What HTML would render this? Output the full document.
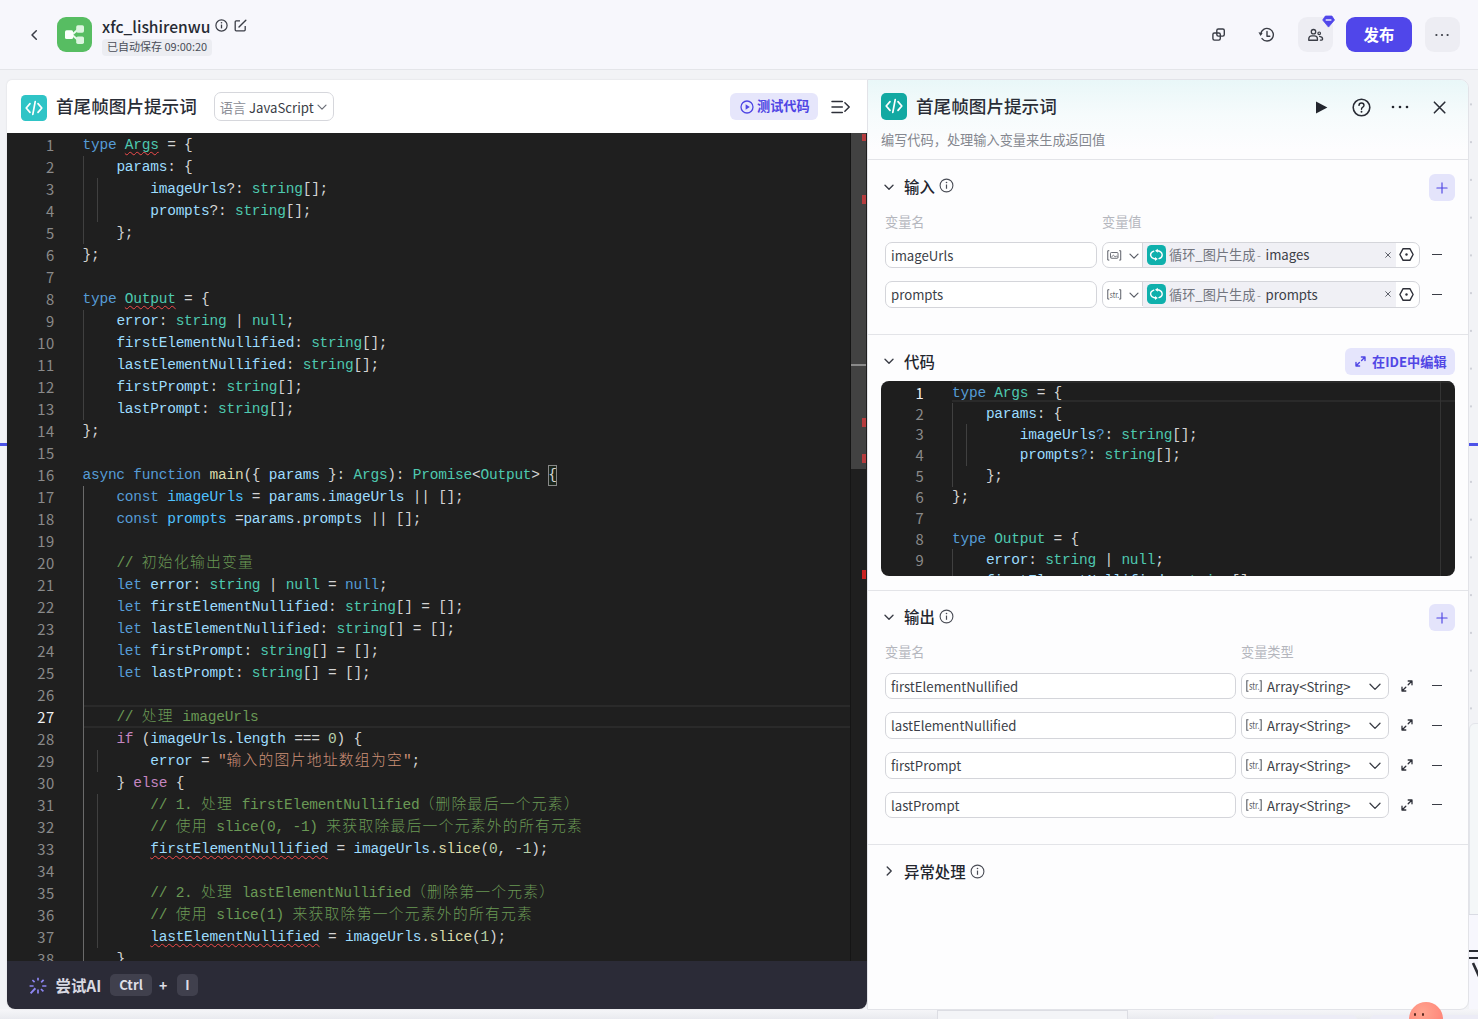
<!DOCTYPE html>
<html lang="zh-CN">
<head>
<meta charset="utf-8">
<title>xfc_lishirenwu</title>
<style>
*{box-sizing:border-box;margin:0;padding:0}
html,body{width:1478px;height:1019px;overflow:hidden}
body{position:relative;background:#f1f2f5;font-family:"Noto Sans CJK SC","Liberation Sans",sans-serif;color:#20232b;-webkit-font-smoothing:antialiased}
.abs{position:absolute}
svg{display:block;position:absolute;overflow:visible}
/* header */
#hdr{position:absolute;left:0;top:0;width:1478px;height:70px;background:#f7f7fc;border-bottom:1px solid #e4e5e9}
#title{position:absolute;left:102px;top:14px;font-size:15.6px;font-weight:500;line-height:24px;color:#262a33;white-space:nowrap}
#saved{position:absolute;left:102px;top:39px;height:17px;padding:0 5px;border-radius:4px;background:#ecedf2;font-size:11px;line-height:15.6px;color:#4a4e58;white-space:nowrap}
#logo{position:absolute;left:57px;top:17px;width:35px;height:35px;border-radius:9px;background:#57bd62}
.hbtn{position:absolute;top:17px;height:35px;border-radius:9px;background:#ededf3}
#pub{position:absolute;left:1346px;top:17px;width:66px;height:35px;border-radius:9px;background:#5046ea;color:#fff;font-size:15.4px;font-weight:700;line-height:35px;text-align:center}
/* left panel */
#lp{position:absolute;left:7px;top:80px;width:860px;height:929px;border-radius:5px 0 8px 8px;background:#fff;overflow:hidden;box-shadow:0 0 2px rgba(0,0,0,.12)}
#lptitle{position:absolute;left:49px;top:11.5px;font-size:17.6px;font-weight:500;line-height:28px;color:#2a2d36;white-space:nowrap}
.cicon{position:absolute;width:26px;height:26px;border-radius:5px}
#lang{position:absolute;left:207px;top:12px;width:120px;height:29px;border:1px solid #d6d7dc;border-radius:7px;font-size:13.2px;line-height:27px;color:#3a3d46;white-space:nowrap;padding-left:4.7px;padding-top:0.6px}
#lang b{font-weight:400;color:#8b8e96}
#test{position:absolute;left:723px;top:13px;width:88px;height:27px;border-radius:6px;background:#e6e6fb;color:#4e45e4;font-size:13.2px;font-weight:700;line-height:25.4px;padding-left:27px;white-space:nowrap}
#ed{position:absolute;left:0;top:53px;width:860px;height:829px;background:#1f1f1f;overflow:hidden}
#ai{position:absolute;left:0;top:881.4px;width:860px;height:48px;background:#2b2b37}
.code{font-family:"Liberation Mono","Noto Sans CJK SC",monospace;font-size:14.5px;letter-spacing:-0.2345px;color:#d4d4d4}
.code .row{position:relative;display:block}
.code .ln{position:absolute;left:0;top:-0.1px;text-align:right;color:#8a8a8a;font-family:"Noto Sans CJK SC","Liberation Sans",sans-serif;font-size:14.8px;letter-spacing:0.4px}
.code .ln.act{color:#f0f0f0}
.code .cd{position:absolute;top:0;white-space:pre}
#ed .row{height:22px;line-height:22px}
#ed .ln{width:47.5px}
#ed .cd{left:75.5px}
.cj{font-family:"Noto Sans CJK SC",sans-serif;font-size:14.8px;letter-spacing:1.25px;font-weight:300;position:relative;top:0.1px;line-height:0}
.sq{text-decoration:underline wavy #f14c4c;text-decoration-thickness:1.2px;text-underline-offset:2px;text-decoration-skip-ink:none}
.bm{display:inline-block;width:8.47px;height:21px;line-height:21px;outline:1px solid #888;outline-offset:-1px;background:rgba(0,100,0,.1);color:#d4d4d4;vertical-align:top;margin-top:0.5px}
.guide{position:absolute;width:1px;background:#404040}
/* right panel */
#rp{position:absolute;left:867px;top:79px;width:602px;height:931px;border-radius:0 9px 9px 0;background:#fdfdfe;border:1px solid #e2e3e8;overflow:hidden}
#rpgrad{position:absolute;left:0;top:0;width:600px;height:70px;background:linear-gradient(180deg,#e9f7f8 0%,#f6fbfc 50%,#fdfdfe 100%)}
#rptitle{position:absolute;left:48px;top:11.8px;font-size:17.6px;font-weight:500;line-height:28px;color:#2a2d36;white-space:nowrap}
#rpsub{position:absolute;left:13px;top:50px;font-size:13.2px;line-height:20px;color:#84878f;white-space:nowrap}
.hr{position:absolute;left:0;width:600px;height:1px;background:#e3e4e8}
.sec{position:absolute;left:36px;margin-top:-1.2px;font-size:15.4px;font-weight:500;line-height:24px;color:#23262e;white-space:nowrap}
.lbl{position:absolute;font-size:13.2px;line-height:20px;color:#b4b6bd;white-space:nowrap}
.plus{position:absolute;left:561px;width:26.4px;height:26.8px;border-radius:6px;background:#e4e4fb}
.inp{position:absolute;height:26.4px;border:1px solid #d4d5da;border-radius:7px;background:#fff;font-size:13.2px;line-height:25.4px;color:#3c3f48;padding-left:5px;white-space:nowrap;overflow:hidden}
.tag{position:absolute;left:40px;top:0;width:253px;height:24.4px;background:#f0f0f5}
.tag span{position:absolute;left:26px;top:1.3px;font-size:13.2px;line-height:22px;color:#72757e;white-space:nowrap}
.tag span b{font-weight:400;color:#3c3f48}
.tag span i{font-style:normal;color:#8b8e96;display:inline-block;width:10px;text-align:center;font-size:11px;position:relative;left:-1.5px}
.loop{position:absolute;left:3.5px;top:2px;width:19px;height:19.7px;border-radius:4.5px;background:#0fb0ac}
#ide{position:absolute;left:477px;top:268.4px;width:110px;height:26.6px;border-radius:6px;background:#e5e5fc;color:#5147e5;font-size:13.2px;font-weight:700;line-height:27px;padding-left:27px;white-space:nowrap}
#rc{position:absolute;left:13px;top:301px;width:574px;height:195px;border-radius:8px;background:#1e1e1e;overflow:hidden}
#rc .row{height:20.9px;line-height:20.9px}
#rc .ln{width:43px}
#rc .cd{left:71px}
.sel{position:absolute;left:373px;width:148px;height:26.4px;border:1px solid #d4d5da;border-radius:7px;background:#fff;font-size:13.2px;line-height:25.4px;color:#3c3f48;padding-left:25px;white-space:nowrap}
</style>
</head>
<body>
<!-- canvas behind -->
<div id="canvas" style="position:absolute;left:0;top:70px;width:1478px;height:949px;background-color:#f2f3f6;background-image:radial-gradient(circle,#cfd1d8 0.8px,transparent 1.25px);background-size:37.75px 37.75px;background-position:17.6px 15.5px"></div>
<div class="abs" style="left:0;top:442.6px;width:7px;height:3px;background:#4d53e8"></div>
<div class="abs" style="left:1469px;top:442.6px;width:9px;height:3px;background:#4d53e8"></div>
<div class="abs" style="left:1469px;top:723px;width:12px;height:290px;background:#f4f7f8;border:1px solid #e3e5ea;border-radius:6px 0 0 0"></div>
<div class="abs" style="left:1469px;top:914px;width:12px;height:1px;background:#d9dbe3"></div>
<div class="abs" style="left:1469px;top:915px;width:12px;height:95px;background:#f7f7fd"></div>
<div class="abs" style="left:1469px;top:949.5px;width:9px;height:2.4px;background:#2a2c33"></div>
<div class="abs" style="left:1469px;top:957px;width:9px;height:2.4px;background:#2a2c33"></div>
<svg style="left:1472px;top:963px" width="8" height="14" viewBox="0 0 8 14"><path d="M1 0 L6 11 L11 0" fill="none" stroke="#2a2c33" stroke-width="2.6"/></svg>
<div class="abs" style="left:0;top:1009px;width:1478px;height:10px;background:linear-gradient(180deg,#f6f6f9 0,#f1f2f5 40%,#e9eaef 100%)"></div>
<div class="abs" style="left:937px;top:1010px;width:191px;height:12px;background:#f3f4f7;border:1px solid #dcdde3"></div>
<div class="abs" style="left:1213px;top:1015px;width:144px;height:10px;background:#ececf6;border-radius:5px 5px 0 0"></div>
<div class="abs" style="left:1370px;top:1015px;width:120px;height:10px;background:#ececf6;border-radius:5px 0 0 0"></div>

<div id="hdr">
  <svg style="left:29px;top:27.7px" width="10" height="14" viewBox="0 0 10 14"><path d="M7.3 2.7 L3 7 L7.3 11.3" fill="none" stroke="#3a3d46" stroke-width="1.5" stroke-linecap="round" stroke-linejoin="round"/></svg>
  <div id="logo">
    <svg style="left:8px;top:8px" width="20" height="20" viewBox="0 0 20 20"><path d="M7 9.7 L13 4.5 M7 9.7 L13 14.9" stroke="#eafaec" stroke-width="2" fill="none"/><rect x="0" y="5.3" width="8.1" height="8.8" rx="1.6" fill="#fbfffb"/><rect x="11.2" y="0.3" width="7.8" height="7.4" rx="1.7" fill="#dcf5df"/><rect x="11.2" y="11.4" width="7.8" height="7.5" rx="1.7" fill="#dcf5df"/></svg>
  </div>
  <div id="title">xfc_lishirenwu</div>
  <svg style="left:215px;top:19px" width="13" height="13" viewBox="0 0 13 13"><circle cx="6.5" cy="6.5" r="5.6" fill="none" stroke="#3a3d46" stroke-width="1.2"/><path d="M6.5 5.6 V9.4" stroke="#3a3d46" stroke-width="1.3"/><circle cx="6.5" cy="3.8" r="0.8" fill="#3a3d46"/></svg>
  <svg style="left:234px;top:19px" width="13" height="13" viewBox="0 0 13 13"><path d="M6 1.8 H2.2 Q1.2 1.8 1.2 2.8 V10.8 Q1.2 11.8 2.2 11.8 H10.2 Q11.2 11.8 11.2 10.8 V7" fill="none" stroke="#3a3d46" stroke-width="1.3"/><path d="M5 8 L11.8 1.2" stroke="#3a3d46" stroke-width="1.4" stroke-linecap="round"/></svg>
  <div id="saved">已自动保存 09:00:20</div>
  <!-- copy icon -->
  <svg style="left:1211px;top:27px" width="15" height="15" viewBox="0 0 15 15"><rect x="5.8" y="2" width="7.5" height="7.1" rx="1.5" fill="none" stroke="#3a3d46" stroke-width="1.4"/><rect x="1.9" y="6" width="7.4" height="7.1" rx="1.5" fill="none" stroke="#3a3d46" stroke-width="1.4"/></svg>
  <!-- history icon -->
  <svg style="left:1258px;top:27px" width="17" height="16" viewBox="0 0 17 16"><path d="M2.75 7.2 A6.3 6.3 0 1 1 4.04 11.58" fill="none" stroke="#3a3d46" stroke-width="1.4" stroke-linecap="round"/><path d="M0.5 5.2 L4.7 6 L2.5 8.9 Z" fill="#3a3d46"/><path d="M9 4.4 V9.2 H11.8" fill="none" stroke="#3a3d46" stroke-width="1.4" stroke-linecap="round" stroke-linejoin="round"/></svg>
  <div class="hbtn" style="left:1298px;width:34.5px"></div>
  <!-- users icon -->
  <svg style="left:1308px;top:28px" width="17" height="14" viewBox="0 0 17 14"><circle cx="5.5" cy="3.7" r="2.2" fill="none" stroke="#3a3d46" stroke-width="1.3"/><path d="M0.75 12.25 V11 Q0.75 7.95 3.8 7.95 H6.4 Q9.45 7.95 9.45 11 V12.25 Z" fill="none" stroke="#3a3d46" stroke-width="1.3" stroke-linejoin="round"/><circle cx="11.2" cy="5.3" r="1.3" fill="none" stroke="#3a3d46" stroke-width="1.2"/><path d="M11.6 8.4 Q14.6 8.8 14.6 11 Q14.6 12.2 12.4 12.2" fill="none" stroke="#3a3d46" stroke-width="1.3" stroke-linecap="round"/></svg>
  <!-- diamond -->
  <svg style="left:1322px;top:15px" width="13" height="13" viewBox="0 0 13 13"><path d="M3.4 1 H9.9 L12.5 5 L6.5 12.1 L0.7 5 Z" fill="#5046ea" stroke="#5046ea" stroke-width="0.8" stroke-linejoin="round"/><path d="M4.2 5 H8.9" stroke="#e8e6ff" stroke-width="1.4" stroke-linecap="round"/></svg>
  <div id="pub">发布</div>
  <div class="hbtn" style="left:1425px;width:35px"></div>
  <svg style="left:1434px;top:33px" width="16" height="4" viewBox="0 0 16 4"><circle cx="2.4" cy="2" r="1.1" fill="#3a3d46"/><circle cx="8" cy="2" r="1.1" fill="#3a3d46"/><circle cx="13.6" cy="2" r="1.1" fill="#3a3d46"/></svg>
</div>

<!-- LEFT PANEL -->
<div id="lp">
  <div class="cicon" style="left:14px;top:14.5px;border-radius:4.5px;background:#2fc4c6">
    <svg style="left:4px;top:5px" width="18" height="16" viewBox="0 0 18 16"><path d="M5 3.6 L1.2 8 L5 12.4 M13 3.6 L16.8 8 L13 12.4 M10.2 1.6 L7.8 14.4" fill="none" stroke="#fff" stroke-width="1.7" stroke-linecap="round" stroke-linejoin="round"/></svg>
  </div>
  <div id="lptitle">首尾帧图片提示词</div>
  <div id="lang"><b>语言</b> JavaScript
    <svg style="left:101.5px;top:11px" width="10" height="7" viewBox="0 0 10 7"><path d="M1 1.2 L5 5.2 L9 1.2" fill="none" stroke="#6b6e77" stroke-width="1.2" stroke-linecap="round" stroke-linejoin="round"/></svg>
  </div>
  <div id="test">测试代码
    <svg style="left:9.5px;top:6.5px" width="14" height="14" viewBox="0 0 14 14"><circle cx="7" cy="7" r="6" fill="none" stroke="#4e45e4" stroke-width="1.3"/><path d="M5.6 4.2 L9.8 7 L5.6 9.8 Z" fill="#4e45e4"/></svg>
  </div>
  <svg style="left:824px;top:20px" width="20" height="14" viewBox="0 0 20 14"><path d="M1 1.5 H11.3 M1 7 H11.3 M1 12.5 H11.3" stroke="#2e3039" stroke-width="1.5" stroke-linecap="round"/><path d="M13.9 2.8 L18.2 7 L13.9 11.2" fill="none" stroke="#2e3039" stroke-width="1.5" stroke-linecap="round" stroke-linejoin="round"/></svg>
  <div id="ed">
    <div class="abs" style="left:77px;top:572px;width:767px;height:23px;border-top:2px solid #2a2a2a;border-bottom:2px solid #2a2a2a"></div>
    <!-- indent guides -->
    <div class="guide" style="left:76px;top:23px;height:88px"></div>
    <div class="guide" style="left:90px;top:45px;height:44px"></div>
    <div class="guide" style="left:76px;top:177px;height:110px"></div>
    <div class="guide" style="left:76px;top:353px;height:476px;background:#6a6a6a"></div>
    <div class="guide" style="left:90px;top:617px;height:22px"></div>
    <div class="guide" style="left:90px;top:661px;height:154px"></div>
    <div class="code abs" style="left:0;top:1.4px;width:860px">
<div class="row"><span class="ln">1</span><span class="cd"><span style="color:#569cd6">type</span> <span class="sq"><span style="color:#4ec9b0">Args</span></span><span style="color:#d4d4d4"> = {</span></span></div>
<div class="row"><span class="ln">2</span><span class="cd">    <span style="color:#9cdcfe">params</span><span style="color:#d4d4d4">: {</span></span></div>
<div class="row"><span class="ln">3</span><span class="cd">        <span style="color:#9cdcfe">imageUrls</span><span style="color:#d4d4d4">?: </span><span style="color:#4ec9b0">string</span><span style="color:#d4d4d4">[];</span></span></div>
<div class="row"><span class="ln">4</span><span class="cd">        <span style="color:#9cdcfe">prompts</span><span style="color:#d4d4d4">?: </span><span style="color:#4ec9b0">string</span><span style="color:#d4d4d4">[];</span></span></div>
<div class="row"><span class="ln">5</span><span class="cd">    <span style="color:#d4d4d4">};</span></span></div>
<div class="row"><span class="ln">6</span><span class="cd"><span style="color:#d4d4d4">};</span></span></div>
<div class="row"><span class="ln">7</span><span class="cd"></span></div>
<div class="row"><span class="ln">8</span><span class="cd"><span style="color:#569cd6">type</span> <span class="sq"><span style="color:#4ec9b0">Output</span></span><span style="color:#d4d4d4"> = {</span></span></div>
<div class="row"><span class="ln">9</span><span class="cd">    <span style="color:#9cdcfe">error</span><span style="color:#d4d4d4">: </span><span style="color:#4ec9b0">string</span><span style="color:#d4d4d4"> | </span><span style="color:#4ec9b0">null</span><span style="color:#d4d4d4">;</span></span></div>
<div class="row"><span class="ln">10</span><span class="cd">    <span style="color:#9cdcfe">firstElementNullified</span><span style="color:#d4d4d4">: </span><span style="color:#4ec9b0">string</span><span style="color:#d4d4d4">[];</span></span></div>
<div class="row"><span class="ln">11</span><span class="cd">    <span style="color:#9cdcfe">lastElementNullified</span><span style="color:#d4d4d4">: </span><span style="color:#4ec9b0">string</span><span style="color:#d4d4d4">[];</span></span></div>
<div class="row"><span class="ln">12</span><span class="cd">    <span style="color:#9cdcfe">firstPrompt</span><span style="color:#d4d4d4">: </span><span style="color:#4ec9b0">string</span><span style="color:#d4d4d4">[];</span></span></div>
<div class="row"><span class="ln">13</span><span class="cd">    <span style="color:#9cdcfe">lastPrompt</span><span style="color:#d4d4d4">: </span><span style="color:#4ec9b0">string</span><span style="color:#d4d4d4">[];</span></span></div>
<div class="row"><span class="ln">14</span><span class="cd"><span style="color:#d4d4d4">};</span></span></div>
<div class="row"><span class="ln">15</span><span class="cd"></span></div>
<div class="row"><span class="ln">16</span><span class="cd"><span style="color:#569cd6">async function</span> <span style="color:#dcdcaa">main</span><span style="color:#d4d4d4">({ </span><span style="color:#9cdcfe">params</span><span style="color:#d4d4d4"> }: </span><span style="color:#4ec9b0">Args</span><span style="color:#d4d4d4">): </span><span style="color:#4ec9b0">Promise</span><span style="color:#d4d4d4">&lt;</span><span style="color:#4ec9b0">Output</span><span style="color:#d4d4d4">&gt; </span><span class="bm">{</span></span></div>
<div class="row"><span class="ln">17</span><span class="cd">    <span style="color:#569cd6">const</span> <span style="color:#4fc1ff">imageUrls</span><span style="color:#d4d4d4"> = </span><span style="color:#9cdcfe">params</span><span style="color:#d4d4d4">.</span><span style="color:#9cdcfe">imageUrls</span><span style="color:#d4d4d4"> || [];</span></span></div>
<div class="row"><span class="ln">18</span><span class="cd">    <span style="color:#569cd6">const</span> <span style="color:#4fc1ff">prompts</span><span style="color:#d4d4d4"> =</span><span style="color:#9cdcfe">params</span><span style="color:#d4d4d4">.</span><span style="color:#9cdcfe">prompts</span><span style="color:#d4d4d4"> || [];</span></span></div>
<div class="row"><span class="ln">19</span><span class="cd"></span></div>
<div class="row"><span class="ln">20</span><span class="cd">    <span style="color:#6a9955">// <span class="cj">初始化输出变量</span></span></span></div>
<div class="row"><span class="ln">21</span><span class="cd">    <span style="color:#569cd6">let</span> <span style="color:#9cdcfe">error</span><span style="color:#d4d4d4">: </span><span style="color:#4ec9b0">string</span><span style="color:#d4d4d4"> | </span><span style="color:#4ec9b0">null</span><span style="color:#d4d4d4"> = </span><span style="color:#569cd6">null</span><span style="color:#d4d4d4">;</span></span></div>
<div class="row"><span class="ln">22</span><span class="cd">    <span style="color:#569cd6">let</span> <span style="color:#9cdcfe">firstElementNullified</span><span style="color:#d4d4d4">: </span><span style="color:#4ec9b0">string</span><span style="color:#d4d4d4">[] = [];</span></span></div>
<div class="row"><span class="ln">23</span><span class="cd">    <span style="color:#569cd6">let</span> <span style="color:#9cdcfe">lastElementNullified</span><span style="color:#d4d4d4">: </span><span style="color:#4ec9b0">string</span><span style="color:#d4d4d4">[] = [];</span></span></div>
<div class="row"><span class="ln">24</span><span class="cd">    <span style="color:#569cd6">let</span> <span style="color:#9cdcfe">firstPrompt</span><span style="color:#d4d4d4">: </span><span style="color:#4ec9b0">string</span><span style="color:#d4d4d4">[] = [];</span></span></div>
<div class="row"><span class="ln">25</span><span class="cd">    <span style="color:#569cd6">let</span> <span style="color:#9cdcfe">lastPrompt</span><span style="color:#d4d4d4">: </span><span style="color:#4ec9b0">string</span><span style="color:#d4d4d4">[] = [];</span></span></div>
<div class="row"><span class="ln">26</span><span class="cd"></span></div>
<div class="row"><span class="ln act">27</span><span class="cd">    <span style="color:#6a9955">// <span class="cj">处理</span> imageUrls</span></span></div>
<div class="row"><span class="ln">28</span><span class="cd">    <span style="color:#c586c0">if</span><span style="color:#d4d4d4"> (</span><span style="color:#9cdcfe">imageUrls</span><span style="color:#d4d4d4">.</span><span style="color:#9cdcfe">length</span><span style="color:#d4d4d4"> === </span><span style="color:#b5cea8">0</span><span style="color:#d4d4d4">) {</span></span></div>
<div class="row"><span class="ln">29</span><span class="cd">        <span style="color:#9cdcfe">error</span><span style="color:#d4d4d4"> = </span><span style="color:#ce9178">&quot;<span class="cj">输入的图片地址数组为空</span>&quot;</span><span style="color:#d4d4d4">;</span></span></div>
<div class="row"><span class="ln">30</span><span class="cd">    <span style="color:#d4d4d4">} </span><span style="color:#c586c0">else</span><span style="color:#d4d4d4"> {</span></span></div>
<div class="row"><span class="ln">31</span><span class="cd">        <span style="color:#6a9955">// 1. <span class="cj">处理</span> firstElementNullified<span class="cj">（删除最后一个元素）</span></span></span></div>
<div class="row"><span class="ln">32</span><span class="cd">        <span style="color:#6a9955">// <span class="cj">使用</span> slice(0, -1) <span class="cj">来获取除最后一个元素外的所有元素</span></span></span></div>
<div class="row"><span class="ln">33</span><span class="cd">        <span class="sq"><span style="color:#9cdcfe">firstElementNullified</span></span><span style="color:#d4d4d4"> = </span><span style="color:#9cdcfe">imageUrls</span><span style="color:#d4d4d4">.</span><span style="color:#dcdcaa">slice</span><span style="color:#d4d4d4">(</span><span style="color:#b5cea8">0</span><span style="color:#d4d4d4">, -</span><span style="color:#b5cea8">1</span><span style="color:#d4d4d4">);</span></span></div>
<div class="row"><span class="ln">34</span><span class="cd"></span></div>
<div class="row"><span class="ln">35</span><span class="cd">        <span style="color:#6a9955">// 2. <span class="cj">处理</span> lastElementNullified<span class="cj">（删除第一个元素）</span></span></span></div>
<div class="row"><span class="ln">36</span><span class="cd">        <span style="color:#6a9955">// <span class="cj">使用</span> slice(1) <span class="cj">来获取除第一个元素外的所有元素</span></span></span></div>
<div class="row"><span class="ln">37</span><span class="cd">        <span class="sq"><span style="color:#9cdcfe">lastElementNullified</span></span><span style="color:#d4d4d4"> = </span><span style="color:#9cdcfe">imageUrls</span><span style="color:#d4d4d4">.</span><span style="color:#dcdcaa">slice</span><span style="color:#d4d4d4">(</span><span style="color:#b5cea8">1</span><span style="color:#d4d4d4">);</span></span></div>
<div class="row"><span class="ln">38</span><span class="cd">    <span style="color:#d4d4d4">}</span></span></div>
    </div>
    <!-- scrollbar -->
    <div class="abs" style="left:843px;top:0;width:1px;height:829px;background:#151515"></div>
    <div class="abs" style="left:844px;top:0;width:15px;height:336px;background:#424242"></div>
    <div class="abs" style="left:844px;top:231px;width:15px;height:2px;background:#8a8a8a"></div>
    <div class="abs" style="left:855px;top:1px;width:4px;height:7px;background:#b63c3e"></div>
    <div class="abs" style="left:855px;top:62px;width:4px;height:9px;background:#b63c3e"></div>
    <div class="abs" style="left:855px;top:285px;width:4px;height:9px;background:#b63c3e"></div>
    <div class="abs" style="left:855px;top:320.5px;width:4px;height:9px;background:#b63c3e"></div>
    <div class="abs" style="left:855px;top:436.5px;width:4px;height:9.5px;background:#c8221f"></div>
  </div>
  <div id="ai">
    <svg style="left:22px;top:15.6px" width="18" height="18" viewBox="0 0 18 18"><g stroke="#8d86f2" stroke-width="1.7" stroke-linecap="butt"><path d="M9 0.8 V3.6"/><path d="M9 12.6 V16.6"/><path d="M0.6 9 H4.6"/><path d="M13.2 9 H17.4"/><path d="M3.4 3 L5.6 5.2"/><path d="M12 12 L14.4 14.4"/><path d="M1.6 16.4 L6.4 11.2" stroke-width="2"/><path d="M12.2 5.4 L14.6 2.8"/></g></svg>
    <div class="abs" style="left:48.5px;top:13.1px;font-size:15.4px;font-weight:700;line-height:22px;color:#d9d9e2;white-space:nowrap">尝试AI</div>
    <div class="abs" style="left:103px;top:12.2px;width:42px;height:22px;border-radius:5px;background:#40404d;color:#dedee6;font-size:13.2px;font-weight:700;line-height:21px;text-align:center">Ctrl</div>
    <div class="abs" style="left:152px;top:12.4px;font-size:14px;font-weight:700;line-height:22px;color:#dedee6">+</div>
    <div class="abs" style="left:170px;top:12.2px;width:21px;height:22px;border-radius:5px;background:#40404d;color:#dedee6;font-size:13.2px;font-weight:700;line-height:21px;text-align:center">I</div>
  </div>
</div>

<!-- RIGHT PANEL -->
<div id="rp">
  <div id="rpgrad"></div>
  <div class="cicon" style="left:13px;top:13px;height:26.6px;background:#12a9a2">
    <svg style="left:4px;top:5px" width="18" height="16" viewBox="0 0 18 16"><path d="M5 3.6 L1.2 8 L5 12.4 M13 3.6 L16.8 8 L13 12.4 M10.2 1.6 L7.8 14.4" fill="none" stroke="#fff" stroke-width="1.7" stroke-linecap="round" stroke-linejoin="round"/></svg>
  </div>
  <div id="rptitle">首尾帧图片提示词</div>
  <svg style="left:447px;top:21px" width="13" height="13" viewBox="0 0 13 13"><path d="M1 0.6 L12.4 6.5 L1 12.4 Z" fill="#23262e"/></svg>
  <svg style="left:483.6px;top:17.5px" width="19" height="19" viewBox="0 0 19 19"><circle cx="9.5" cy="9.5" r="8.3" fill="none" stroke="#2a2d36" stroke-width="1.6"/><path d="M7 7.4 Q7 5 9.5 5 Q12 5 12 7.2 Q12 8.6 10.6 9.3 Q9.5 9.9 9.5 11.2" fill="none" stroke="#23262e" stroke-width="1.4" stroke-linecap="round"/><circle cx="9.5" cy="13.8" r="0.95" fill="#23262e"/></svg>
  <svg style="left:523px;top:25px" width="18" height="4" viewBox="0 0 18 4"><circle cx="2" cy="2" r="1.3" fill="#23262e"/><circle cx="9" cy="2" r="1.3" fill="#23262e"/><circle cx="16" cy="2" r="1.3" fill="#23262e"/></svg>
  <svg style="left:565px;top:21px" width="13" height="13" viewBox="0 0 13 13"><path d="M1.4 1.2 L11.8 11.8 M11.8 1.2 L1.4 11.8" stroke="#2a2d36" stroke-width="1.6" stroke-linecap="round"/></svg>
  <div id="rpsub">编写代码，处理输入变量来生成返回值</div>
  <div class="hr" style="top:79px"></div>

  <!-- 输入 -->
  <svg style="left:16px;top:104px" width="10" height="7" viewBox="0 0 10 7"><path d="M1 1.2 L5 5.2 L9 1.2" fill="none" stroke="#3a3d46" stroke-width="1.4" stroke-linecap="round" stroke-linejoin="round"/></svg>
  <div class="sec" style="top:95px">输入</div>
  <svg class="info" style="left:71px;top:98px" width="15" height="15" viewBox="0 0 15 15"><circle cx="7.5" cy="7.5" r="6.4" fill="none" stroke="#4a4d56" stroke-width="1.1"/><path d="M7.5 6.6 V10.8" stroke="#4a4d56" stroke-width="1.2"/><circle cx="7.5" cy="4.5" r="0.8" fill="#4a4d56"/></svg>
  <div class="plus" style="top:94px"><svg style="left:6.6px;top:7.7px" width="12" height="12" viewBox="0 0 12 12"><path d="M6 0.9 V11.1 M0.9 6 H11.1" stroke="#4e45e4" stroke-width="1.15" stroke-linecap="round"/></svg></div>
  <div class="lbl" style="left:17px;top:132px">变量名</div>
  <div class="lbl" style="left:234px;top:132px">变量值</div>

  <div class="inp" style="left:17px;top:162px;width:212px">imageUrls</div>
  <div class="inp" style="left:234px;top:162px;width:318px;padding:0">
    <svg style="left:3.5px;top:6.8px" width="14.5" height="10.8" viewBox="0 0 16 12"><path d="M2.5 0.8 H0.8 V11.2 H2.5 M13.5 0.8 H15.2 V11.2 H13.5" fill="none" stroke="#5a5d66" stroke-width="1.1"/><rect x="3.8" y="2.8" width="8.4" height="6.4" rx="1" fill="none" stroke="#5a5d66" stroke-width="1"/><path d="M4.5 8.2 L7 5.8 L9 7.6 L10.4 6.6 L11.8 8" fill="none" stroke="#5a5d66" stroke-width="0.9"/></svg>
    <svg style="left:25.5px;top:9.5px" width="10" height="7" viewBox="0 0 10 7"><path d="M1 1.2 L5 5.2 L9 1.2" fill="none" stroke="#5a5d66" stroke-width="1.2" stroke-linecap="round" stroke-linejoin="round"/></svg>
    <div class="abs" style="left:39px;top:0;width:1px;height:24px;background:#d4d5da"></div>
    <div class="tag"><div class="loop"><svg style="left:0;top:0" width="19" height="20" viewBox="0 0 19 20"><path d="M6.75 6.17 A5.8 4.2 0 0 0 8.2 14 M12.05 13.63 A5.8 4.2 0 0 0 10.6 5.8" fill="none" stroke="#fff" stroke-width="1.4" stroke-linecap="round"/><path d="M10.8 14 L8 12 V16 Z M8 5.8 L10.8 3.8 V7.8 Z" fill="#fff"/></svg></div><span>循环_图片生成<i>-</i><b>images</b></span>
      <svg style="left:241.8px;top:8.6px" width="6" height="6" viewBox="0 0 6 6"><path d="M0.4 0.4 L5.6 5.6 M5.6 0.4 L0.4 5.6" stroke="#5f626b" stroke-width="1" fill="none"/></svg></div>
    <svg style="left:296.2px;top:4.4px" width="15" height="15" viewBox="0 0 15 15"><path d="M0.9 7.5 L4.1 1.7 H10.9 L14.1 7.5 L10.9 13.3 H4.1 Z" fill="none" stroke="#2e3039" stroke-width="1.4" stroke-linejoin="round"/><circle cx="7.5" cy="7.5" r="1.2" fill="#2e3039"/></svg>
  </div>
  <div class="abs" style="left:564px;top:174px;width:10px;height:1.3px;background:#3a3d46"></div>

  <div class="inp" style="left:17px;top:201.4px;width:212px">prompts</div>
  <div class="inp" style="left:234px;top:201.4px;width:318px;padding:0">
    <svg style="left:3.5px;top:6.8px" width="14.5" height="10.8" viewBox="0 0 16 12"><path d="M2.5 0.8 H0.8 V11.2 H2.5 M13.5 0.8 H15.2 V11.2 H13.5" fill="none" stroke="#5a5d66" stroke-width="1.1"/><text x="8.2" y="9.6" font-size="9.4" text-anchor="middle" textLength="10.6" lengthAdjust="spacingAndGlyphs" fill="#5a5d66" font-family="Noto Sans CJK SC, sans-serif">str.</text></svg>
    <svg style="left:25.5px;top:9.5px" width="10" height="7" viewBox="0 0 10 7"><path d="M1 1.2 L5 5.2 L9 1.2" fill="none" stroke="#5a5d66" stroke-width="1.2" stroke-linecap="round" stroke-linejoin="round"/></svg>
    <div class="abs" style="left:39px;top:0;width:1px;height:24px;background:#d4d5da"></div>
    <div class="tag"><div class="loop"><svg style="left:0;top:0" width="19" height="20" viewBox="0 0 19 20"><path d="M6.75 6.17 A5.8 4.2 0 0 0 8.2 14 M12.05 13.63 A5.8 4.2 0 0 0 10.6 5.8" fill="none" stroke="#fff" stroke-width="1.4" stroke-linecap="round"/><path d="M10.8 14 L8 12 V16 Z M8 5.8 L10.8 3.8 V7.8 Z" fill="#fff"/></svg></div><span>循环_图片生成<i>-</i><b>prompts</b></span>
      <svg style="left:241.8px;top:8.6px" width="6" height="6" viewBox="0 0 6 6"><path d="M0.4 0.4 L5.6 5.6 M5.6 0.4 L0.4 5.6" stroke="#5f626b" stroke-width="1" fill="none"/></svg></div>
    <svg style="left:296.2px;top:4.4px" width="15" height="15" viewBox="0 0 15 15"><path d="M0.9 7.5 L4.1 1.7 H10.9 L14.1 7.5 L10.9 13.3 H4.1 Z" fill="none" stroke="#2e3039" stroke-width="1.4" stroke-linejoin="round"/><circle cx="7.5" cy="7.5" r="1.2" fill="#2e3039"/></svg>
  </div>
  <div class="abs" style="left:564px;top:214px;width:10px;height:1.3px;background:#3a3d46"></div>

  <div class="hr" style="top:254px"></div>

  <!-- 代码 -->
  <svg style="left:16px;top:278px" width="10" height="7" viewBox="0 0 10 7"><path d="M1 1.2 L5 5.2 L9 1.2" fill="none" stroke="#3a3d46" stroke-width="1.4" stroke-linecap="round" stroke-linejoin="round"/></svg>
  <div class="sec" style="top:270px">代码</div>
  <div id="ide">在IDE中编辑
    <svg style="left:10px;top:8px" width="11" height="11" viewBox="0 0 11 11"><path d="M6.4 1 H10 V4.6 M10 1 L6.6 4.4 M4.6 10 H1 V6.4 M1 10 L4.4 6.6" fill="none" stroke="#4e45e4" stroke-width="1.4" stroke-linecap="round" stroke-linejoin="round"/></svg>
  </div>
  <div id="rc">
    <div class="abs" style="left:71px;top:-0.5px;width:503px;height:21.5px;border-top:2px solid #2a2a2a;border-bottom:2px solid #2a2a2a"></div>
    <div class="guide" style="left:71px;top:22px;height:84px"></div>
    <div class="guide" style="left:85px;top:43px;height:42px"></div>
    <div class="guide" style="left:71px;top:168px;height:30px"></div>
    <div class="abs" style="left:559px;top:0;width:1px;height:195px;background:#333"></div>
    <div class="code abs" style="left:0;top:1.8px;width:574px">
<div class="row"><span class="ln act">1</span><span class="cd"><span style="color:#569cd6">type</span> <span class="nosq"><span style="color:#4ec9b0">Args</span></span><span style="color:#d4d4d4"> = {</span></span></div>
<div class="row"><span class="ln">2</span><span class="cd">    <span style="color:#9cdcfe">params</span><span style="color:#d4d4d4">: {</span></span></div>
<div class="row"><span class="ln">3</span><span class="cd">        <span style="color:#9cdcfe">imageUrls</span><span style="color:#569cd6">?</span><span style="color:#d4d4d4">: </span><span style="color:#4ec9b0">string</span><span style="color:#d4d4d4">[];</span></span></div>
<div class="row"><span class="ln">4</span><span class="cd">        <span style="color:#9cdcfe">prompts</span><span style="color:#569cd6">?</span><span style="color:#d4d4d4">: </span><span style="color:#4ec9b0">string</span><span style="color:#d4d4d4">[];</span></span></div>
<div class="row"><span class="ln">5</span><span class="cd">    <span style="color:#d4d4d4">};</span></span></div>
<div class="row"><span class="ln">6</span><span class="cd"><span style="color:#d4d4d4">};</span></span></div>
<div class="row"><span class="ln">7</span><span class="cd"></span></div>
<div class="row"><span class="ln">8</span><span class="cd"><span style="color:#569cd6">type</span> <span class="nosq"><span style="color:#4ec9b0">Output</span></span><span style="color:#d4d4d4"> = {</span></span></div>
<div class="row"><span class="ln">9</span><span class="cd">    <span style="color:#9cdcfe">error</span><span style="color:#d4d4d4">: </span><span style="color:#4ec9b0">string</span><span style="color:#d4d4d4"> | </span><span style="color:#4ec9b0">null</span><span style="color:#d4d4d4">;</span></span></div>
<div class="row"><span class="ln">10</span><span class="cd">    <span style="color:#9cdcfe">firstElementNullified</span><span style="color:#d4d4d4">: </span><span style="color:#4ec9b0">string</span><span style="color:#d4d4d4">[];</span></span></div>
    </div>
  </div>
  <div class="hr" style="top:510px"></div>

  <!-- 输出 -->
  <svg style="left:16px;top:534px" width="10" height="7" viewBox="0 0 10 7"><path d="M1 1.2 L5 5.2 L9 1.2" fill="none" stroke="#3a3d46" stroke-width="1.4" stroke-linecap="round" stroke-linejoin="round"/></svg>
  <div class="sec" style="top:525px">输出</div>
  <svg class="info" style="left:71px;top:529px" width="15" height="15" viewBox="0 0 15 15"><circle cx="7.5" cy="7.5" r="6.4" fill="none" stroke="#4a4d56" stroke-width="1.1"/><path d="M7.5 6.6 V10.8" stroke="#4a4d56" stroke-width="1.2"/><circle cx="7.5" cy="4.5" r="0.8" fill="#4a4d56"/></svg>
  <div class="plus" style="top:524.3px"><svg style="left:6.6px;top:7.7px" width="12" height="12" viewBox="0 0 12 12"><path d="M6 0.9 V11.1 M0.9 6 H11.1" stroke="#4e45e4" stroke-width="1.15" stroke-linecap="round"/></svg></div>
  <div class="lbl" style="left:17px;top:562px">变量名</div>
  <div class="lbl" style="left:373px;top:562px">变量类型</div>
<div class="inp" style="left:17px;top:593.0px;width:351px">firstElementNullified</div>
<div class="sel" style="top:593.0px"><svg style="left:4px;top:6px" width="16" height="12" viewBox="0 0 16 12"><path d="M2.5 0.8 H0.8 V11.2 H2.5 M13.5 0.8 H15.2 V11.2 H13.5" fill="none" stroke="#5a5d66" stroke-width="1.1"/><text x="8.2" y="9.6" font-size="9.4" text-anchor="middle" textLength="10.6" lengthAdjust="spacingAndGlyphs" fill="#5a5d66" font-family="Noto Sans CJK SC, sans-serif">str.</text></svg>Array&lt;String&gt;<svg style="left:127px;top:9px" width="12" height="8" viewBox="0 0 12 8"><path d="M1 1.2 L6 6.4 L11 1.2" fill="none" stroke="#3a3d46" stroke-width="1.3" stroke-linecap="round" stroke-linejoin="round"/></svg></div>
<svg style="left:533px;top:600.0px" width="12" height="12" viewBox="0 0 12 12"><path d="M7.2 1 H11 V4.8 M11 1 L7.2 4.8 M4.8 11 H1 V7.2 M1 11 L4.8 7.2" fill="none" stroke="#2e3039" stroke-width="1.3" stroke-linecap="round" stroke-linejoin="round"/></svg>
<div class="abs" style="left:564px;top:605px;width:10px;height:1.3px;background:#3a3d46"></div>
<div class="inp" style="left:17px;top:632.3px;width:351px">lastElementNullified</div>
<div class="sel" style="top:632.3px"><svg style="left:4px;top:6px" width="16" height="12" viewBox="0 0 16 12"><path d="M2.5 0.8 H0.8 V11.2 H2.5 M13.5 0.8 H15.2 V11.2 H13.5" fill="none" stroke="#5a5d66" stroke-width="1.1"/><text x="8.2" y="9.6" font-size="9.4" text-anchor="middle" textLength="10.6" lengthAdjust="spacingAndGlyphs" fill="#5a5d66" font-family="Noto Sans CJK SC, sans-serif">str.</text></svg>Array&lt;String&gt;<svg style="left:127px;top:9px" width="12" height="8" viewBox="0 0 12 8"><path d="M1 1.2 L6 6.4 L11 1.2" fill="none" stroke="#3a3d46" stroke-width="1.3" stroke-linecap="round" stroke-linejoin="round"/></svg></div>
<svg style="left:533px;top:639.3px" width="12" height="12" viewBox="0 0 12 12"><path d="M7.2 1 H11 V4.8 M11 1 L7.2 4.8 M4.8 11 H1 V7.2 M1 11 L4.8 7.2" fill="none" stroke="#2e3039" stroke-width="1.3" stroke-linecap="round" stroke-linejoin="round"/></svg>
<div class="abs" style="left:564px;top:645px;width:10px;height:1.3px;background:#3a3d46"></div>
<div class="inp" style="left:17px;top:672.4px;width:351px">firstPrompt</div>
<div class="sel" style="top:672.4px"><svg style="left:4px;top:6px" width="16" height="12" viewBox="0 0 16 12"><path d="M2.5 0.8 H0.8 V11.2 H2.5 M13.5 0.8 H15.2 V11.2 H13.5" fill="none" stroke="#5a5d66" stroke-width="1.1"/><text x="8.2" y="9.6" font-size="9.4" text-anchor="middle" textLength="10.6" lengthAdjust="spacingAndGlyphs" fill="#5a5d66" font-family="Noto Sans CJK SC, sans-serif">str.</text></svg>Array&lt;String&gt;<svg style="left:127px;top:9px" width="12" height="8" viewBox="0 0 12 8"><path d="M1 1.2 L6 6.4 L11 1.2" fill="none" stroke="#3a3d46" stroke-width="1.3" stroke-linecap="round" stroke-linejoin="round"/></svg></div>
<svg style="left:533px;top:679.4px" width="12" height="12" viewBox="0 0 12 12"><path d="M7.2 1 H11 V4.8 M11 1 L7.2 4.8 M4.8 11 H1 V7.2 M1 11 L4.8 7.2" fill="none" stroke="#2e3039" stroke-width="1.3" stroke-linecap="round" stroke-linejoin="round"/></svg>
<div class="abs" style="left:564px;top:685px;width:10px;height:1.3px;background:#3a3d46"></div>
<div class="inp" style="left:17px;top:711.6px;width:351px">lastPrompt</div>
<div class="sel" style="top:711.6px"><svg style="left:4px;top:6px" width="16" height="12" viewBox="0 0 16 12"><path d="M2.5 0.8 H0.8 V11.2 H2.5 M13.5 0.8 H15.2 V11.2 H13.5" fill="none" stroke="#5a5d66" stroke-width="1.1"/><text x="8.2" y="9.6" font-size="9.4" text-anchor="middle" textLength="10.6" lengthAdjust="spacingAndGlyphs" fill="#5a5d66" font-family="Noto Sans CJK SC, sans-serif">str.</text></svg>Array&lt;String&gt;<svg style="left:127px;top:9px" width="12" height="8" viewBox="0 0 12 8"><path d="M1 1.2 L6 6.4 L11 1.2" fill="none" stroke="#3a3d46" stroke-width="1.3" stroke-linecap="round" stroke-linejoin="round"/></svg></div>
<svg style="left:533px;top:718.6px" width="12" height="12" viewBox="0 0 12 12"><path d="M7.2 1 H11 V4.8 M11 1 L7.2 4.8 M4.8 11 H1 V7.2 M1 11 L4.8 7.2" fill="none" stroke="#2e3039" stroke-width="1.3" stroke-linecap="round" stroke-linejoin="round"/></svg>
<div class="abs" style="left:564px;top:724px;width:10px;height:1.3px;background:#3a3d46"></div>
  <div class="hr" style="top:764px"></div>
  <svg style="left:18px;top:786px" width="7" height="10" viewBox="0 0 7 10"><path d="M1.2 1 L5.2 5 L1.2 9" fill="none" stroke="#3a3d46" stroke-width="1.4" stroke-linecap="round" stroke-linejoin="round"/></svg>
  <div class="sec" style="top:780px">异常处理</div>
  <svg class="info" style="left:102px;top:784px" width="15" height="15" viewBox="0 0 15 15"><circle cx="7.5" cy="7.5" r="6.4" fill="none" stroke="#4a4d56" stroke-width="1.1"/><path d="M7.5 6.6 V10.8" stroke="#4a4d56" stroke-width="1.2"/><circle cx="7.5" cy="4.5" r="0.8" fill="#4a4d56"/></svg>
</div>
<div class="abs" style="left:1408.5px;top:1002px;width:34px;height:34px;border-radius:50%;background:radial-gradient(circle at 40% 30%,#ffa590 0,#ff8a7c 60%,#f97f74 100%)"></div>
<div class="abs" style="left:1414px;top:1013px;width:2px;height:3px;border-radius:1px;background:#5a2a20"></div>
<div class="abs" style="left:1422px;top:1013px;width:2px;height:3px;border-radius:1px;background:#5a2a20"></div>
</body>
</html>
